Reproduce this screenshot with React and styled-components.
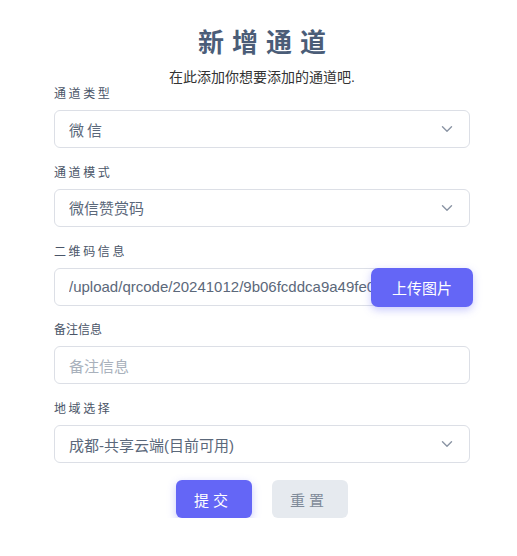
import React from "react";
import styled, { createGlobalStyle } from "styled-components";

const GlobalStyle = createGlobalStyle`
  html, body { margin: 0; padding: 0; background: #fff; }
  body { font-family: "Liberation Sans", "Noto Sans CJK SC", sans-serif; }
`;

const Page = styled.div`
  width: 416px;
  margin-left: 54px;
  padding-top: 26px;
`;

const Title = styled.h1`
  margin: 0;
  text-align: center;
  font-size: 26px;
  line-height: 34px;
  font-weight: 700;
  letter-spacing: 8px;
  padding-left: 8px;
  color: #4b5d78;
`;

const Subtitle = styled.p`
  margin: 7px 0 0;
  text-align: center;
  font-size: 14px;
  line-height: 20px;
  color: #333;
`;

const Field = styled.div`
  margin-top: ${(p) => (p.$first ? "-1px" : "16.75px")};
`;

const Label = styled.div`
  font-size: 12px;
  line-height: 17px;
  height: 17px;
  margin-bottom: 7px;
  color: #4a5568;
  letter-spacing: ${(p) => (p.$tight ? "0" : "2.6px")};
`;

const Box = styled.div`
  position: relative;
  box-sizing: border-box;
  height: 38px;
  border: 1px solid #dcdfe6;
  border-radius: 6px;
  background: #fff;
  display: flex;
  align-items: center;
  padding: 0 16px 0 14px;
`;

const Value = styled.span`
  flex: 1;
  min-width: 0;
  max-width: ${(p) => p.$maxWidth || "none"};
  font-size: 15px;
  color: ${(p) => (p.$placeholder ? "#a9b1bc" : "#5b687a")};
  letter-spacing: ${(p) => p.$spacing || "0"};
  white-space: nowrap;
  overflow: hidden;
`;

const Chevron = styled.svg`
  width: 12px;
  height: 8px;
  flex: none;
  color: #8a94a4;
`;

const UploadButton = styled.button`
  position: absolute;
  top: -1px;
  right: -4px;
  height: 39px;
  width: 102px;
  border: none;
  border-radius: 7px;
  background: #6466f6;
  color: #fff;
  font-family: inherit;
  font-size: 15px;
  box-shadow: 0 3px 8px rgba(100, 102, 246, 0.35);
`;

const Actions = styled.div`
  display: flex;
  justify-content: center;
  gap: 20px;
  margin-top: 17px;
`;

const ActionButton = styled.button`
  width: 76px;
  height: 38px;
  border: none;
  border-radius: 6px;
  font-family: inherit;
  font-size: 15px;
  letter-spacing: 4px;
  padding-left: 4px;
  background: ${(p) => (p.$primary ? "#6466f6" : "#e6eaef")};
  color: ${(p) => (p.$primary ? "#fff" : "#7f8a99")};
  box-shadow: ${(p) => (p.$primary ? "0 3px 8px rgba(100, 102, 246, 0.35)" : "none")};
`;

function ChevronDown() {
  return (
    <Chevron viewBox="0 0 12 8" fill="none" stroke="currentColor" strokeWidth={1.4} strokeLinecap="round" strokeLinejoin="round">
      <path d="M1.5 1.8 6 6.2l4.5-4.4" />
    </Chevron>
  );
}

export default function App() {
  return (
    <Page>
      <GlobalStyle />
      <Title>新增通道</Title>
      <Subtitle>在此添加你想要添加的通道吧.</Subtitle>

      <Field $first>
        <Label>通道类型</Label>
        <Box>
          <Value $spacing="3px">微信</Value>
          <ChevronDown />
        </Box>
      </Field>

      <Field>
        <Label>通道模式</Label>
        <Box>
          <Value>微信赞赏码</Value>
          <ChevronDown />
        </Box>
      </Field>

      <Field>
        <Label>二维码信息</Label>
        <Box>
          <Value $maxWidth="302px">/upload/qrcode/20241012/9b06fcddca9a49fe0c4b2a1d.png</Value>
          <UploadButton type="button">上传图片</UploadButton>
        </Box>
      </Field>

      <Field>
        <Label $tight>备注信息</Label>
        <Box>
          <Value $placeholder>备注信息</Value>
        </Box>
      </Field>

      <Field>
        <Label>地域选择</Label>
        <Box>
          <Value>成都-共享云端(目前可用)</Value>
          <ChevronDown />
        </Box>
      </Field>

      <Actions>
        <ActionButton $primary type="button">提交</ActionButton>
        <ActionButton type="button">重置</ActionButton>
      </Actions>
    </Page>
  );
}
